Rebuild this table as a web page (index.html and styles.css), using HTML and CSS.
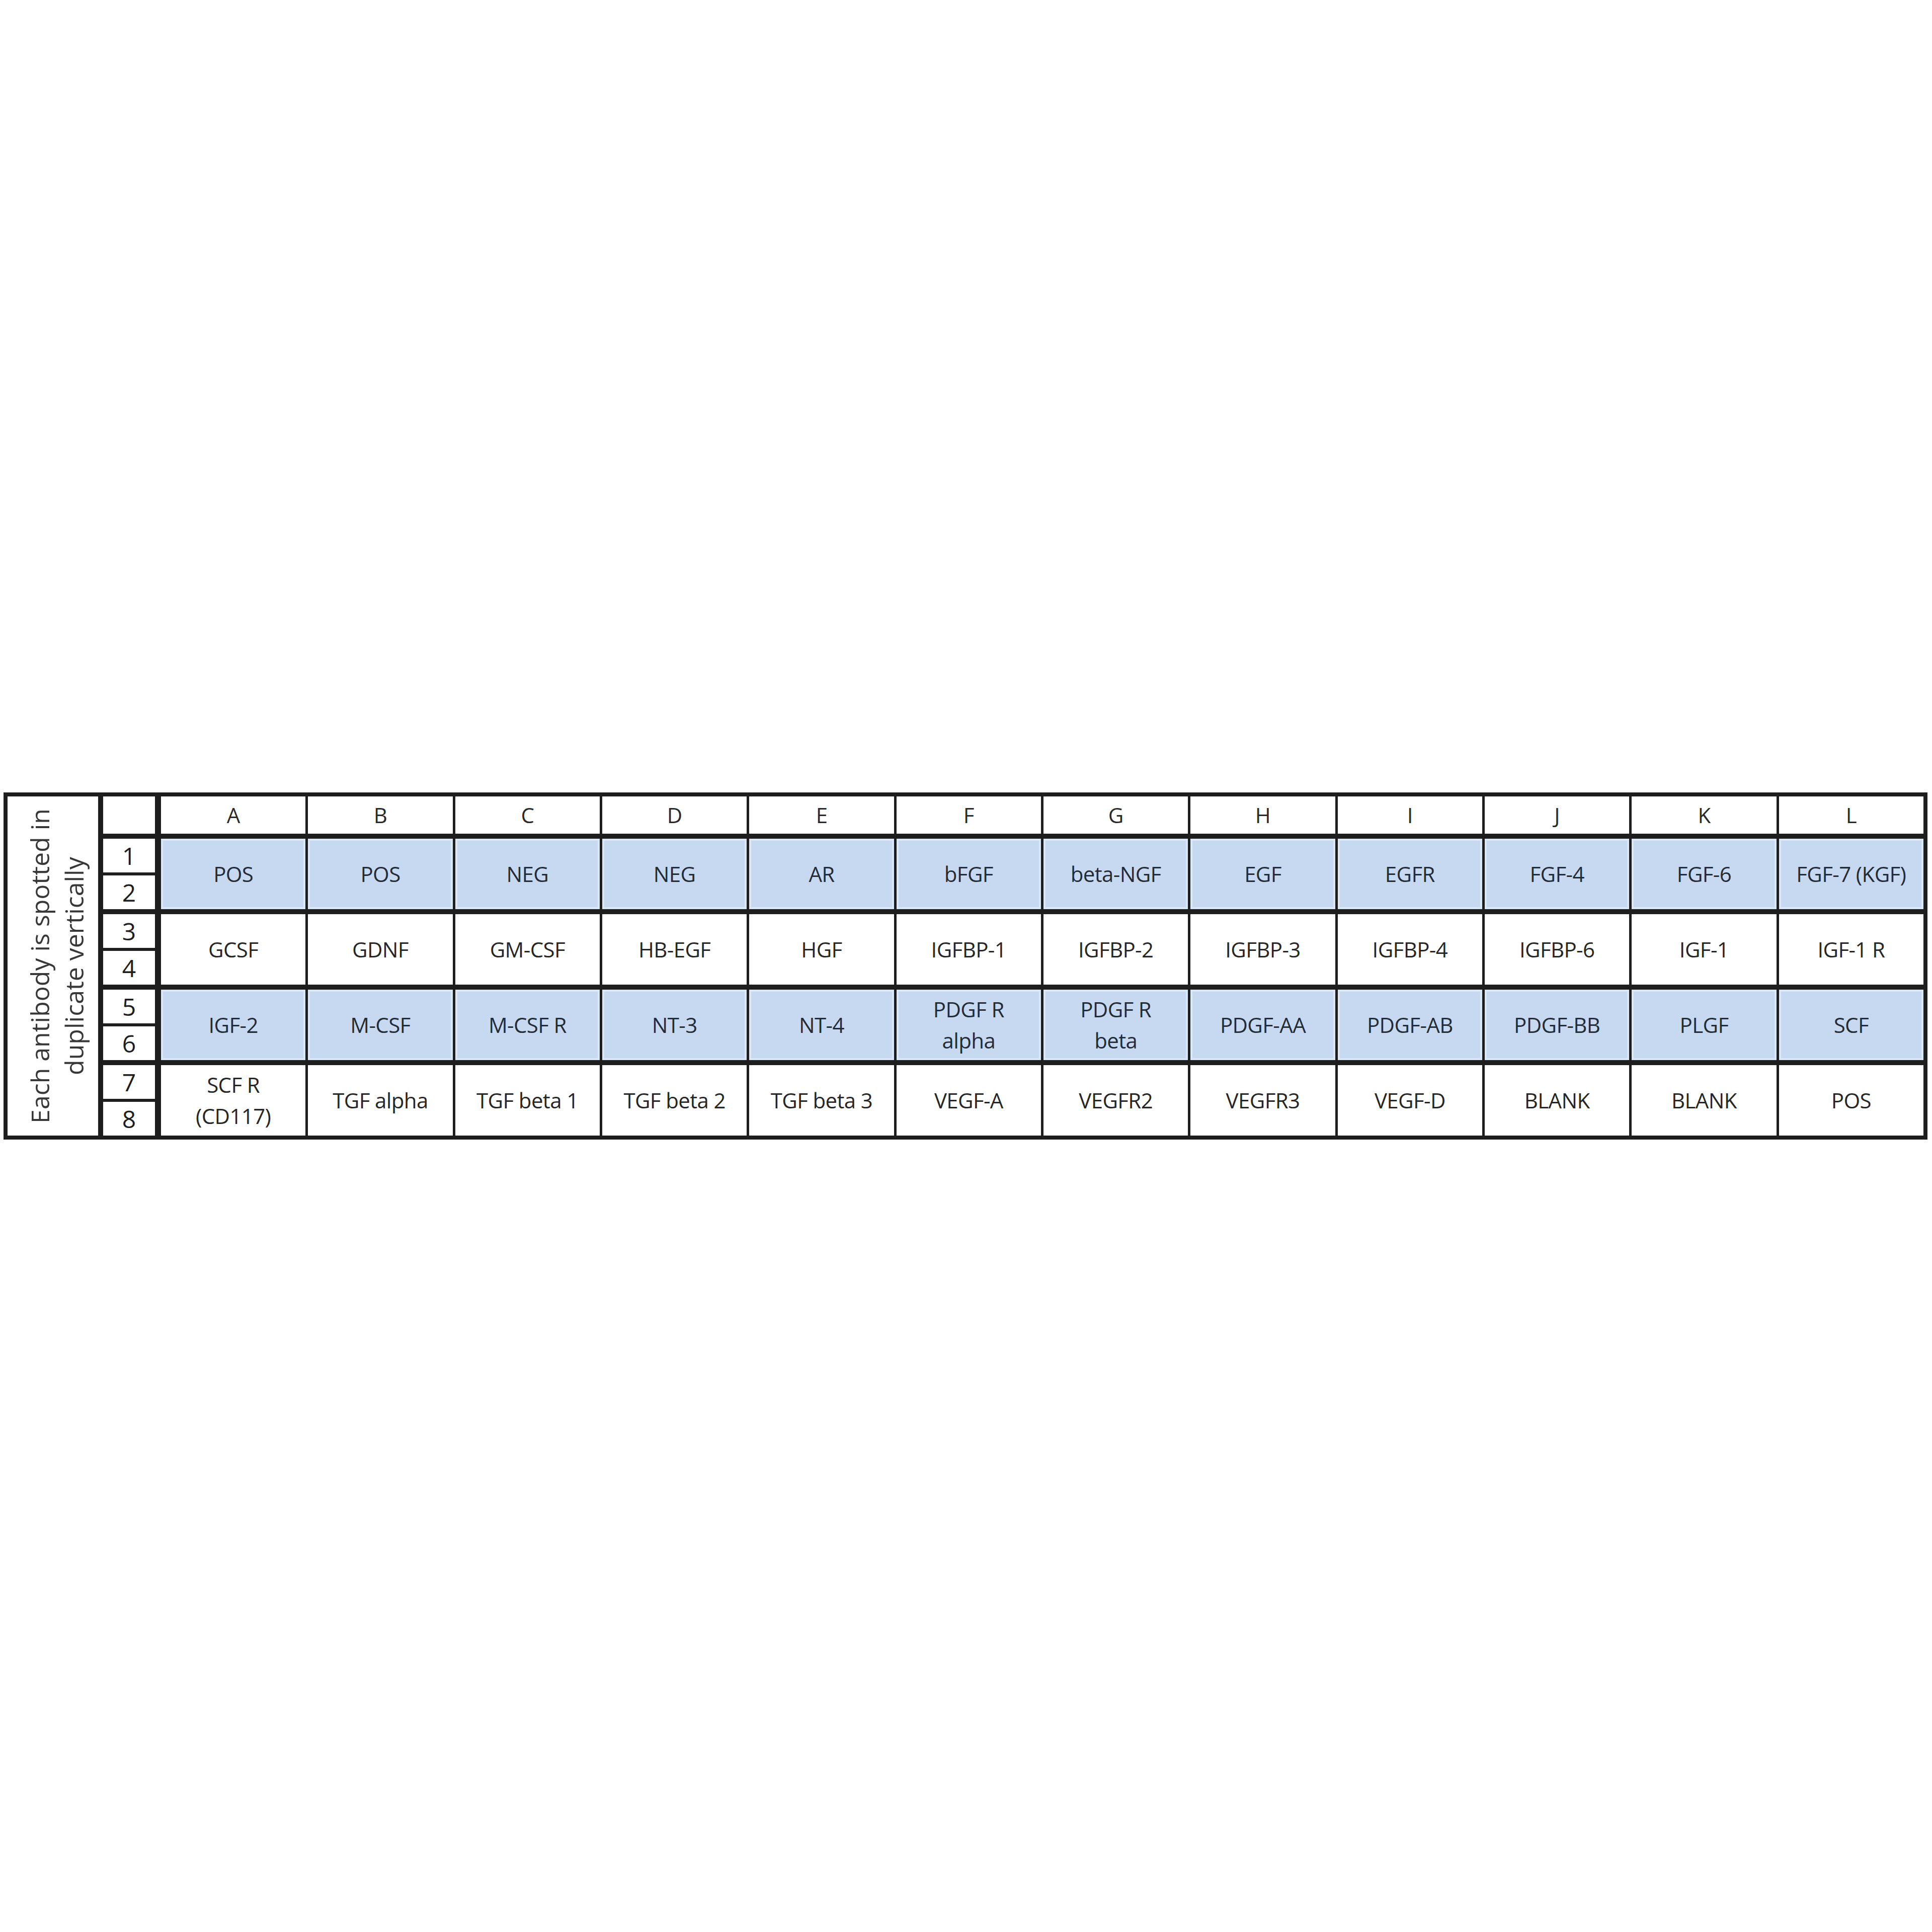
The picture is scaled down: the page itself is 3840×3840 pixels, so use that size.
FILE: index.html
```html
<!DOCTYPE html>
<html lang="en">
<head>
<meta charset="utf-8">
<title>Antibody array map</title>
<link rel="stylesheet" href="styles.css">
</head>
<body>
<div class="sheet">
  <div class="side">
    <div class="side-label">Each antibody is spotted in<br>duplicate vertically</div>
  </div>
  <div class="nums">
    <div class="nums-head"></div>
    <div class="nums-grp"><div class="n">1</div><div class="n">2</div></div>
    <div class="nums-grp"><div class="n">3</div><div class="n">4</div></div>
    <div class="nums-grp"><div class="n">5</div><div class="n">6</div></div>
    <div class="nums-grp"><div class="n">7</div><div class="n">8</div></div>
  </div>
  <div class="grid">
    <div class="c h">A</div><div class="c h">B</div><div class="c h">C</div><div class="c h">D</div><div class="c h">E</div><div class="c h">F</div><div class="c h">G</div><div class="c h">H</div><div class="c h">I</div><div class="c h">J</div><div class="c h">K</div><div class="c h">L</div>

    <div class="c b">POS</div><div class="c b">POS</div><div class="c b">NEG</div><div class="c b">NEG</div><div class="c b">AR</div><div class="c b">bFGF</div><div class="c b">beta-NGF</div><div class="c b">EGF</div><div class="c b">EGFR</div><div class="c b">FGF-4</div><div class="c b">FGF-6</div><div class="c b">FGF-7 (KGF)</div>

    <div class="c w">GCSF</div><div class="c w">GDNF</div><div class="c w">GM-CSF</div><div class="c w">HB-EGF</div><div class="c w">HGF</div><div class="c w">IGFBP-1</div><div class="c w">IGFBP-2</div><div class="c w">IGFBP-3</div><div class="c w">IGFBP-4</div><div class="c w">IGFBP-6</div><div class="c w">IGF-1</div><div class="c w">IGF-1 R</div>

    <div class="c b">IGF-2</div><div class="c b">M-CSF</div><div class="c b">M-CSF R</div><div class="c b">NT-3</div><div class="c b">NT-4</div><div class="c b">PDGF R<br>alpha</div><div class="c b">PDGF R<br>beta</div><div class="c b">PDGF-AA</div><div class="c b">PDGF-AB</div><div class="c b">PDGF-BB</div><div class="c b">PLGF</div><div class="c b">SCF</div>

    <div class="c w">SCF R<br>(CD117)</div><div class="c w">TGF alpha</div><div class="c w">TGF beta 1</div><div class="c w">TGF beta 2</div><div class="c w">TGF beta 3</div><div class="c w">VEGF-A</div><div class="c w">VEGFR2</div><div class="c w">VEGFR3</div><div class="c w">VEGF-D</div><div class="c w">BLANK</div><div class="c w">BLANK</div><div class="c w">POS</div>
  </div>
</div>
</body>
</html>
```

FILE: styles.css
```css
html, body {
  margin: 0;
  background: #ffffff;
}

body {
  padding: 1575px 0 0 7px;
  font-family: "Open Sans", "Noto Sans", sans-serif;
  color: #2a2a2a;
}

.sheet {
  display: flex;
  width: max-content;
  border: 8px solid #1e1e1e;
  background: #ffffff;
}

.side {
  box-sizing: border-box;
  width: 190px;
  padding-left: 16px;
  border-right: 10px solid #1e1e1e;
  display: flex;
  align-items: center;
  justify-content: center;
}

.side-label {
  writing-mode: vertical-rl;
  transform: rotate(180deg);
  text-align: center;
  font-size: 50px;
  line-height: 68px;
  color: #383838;
  white-space: nowrap;
}

.nums {
  box-sizing: border-box;
  width: 115px;
  border-right: 12px solid #1e1e1e;
  display: flex;
  flex-direction: column;
}

.nums-head {
  height: 74px;
  border-bottom: 10px solid #1e1e1e;
}

.nums-grp {
  height: 140px;
  display: flex;
  flex-direction: column;
  border-bottom: 10px solid #1e1e1e;
}

.nums-grp:last-child {
  border-bottom: 0;
}

.n {
  flex: 1;
  display: flex;
  align-items: center;
  justify-content: center;
  font-size: 48px;
  font-weight: 500;
  color: #1e1e1e;
}

.n:first-child {
  border-bottom: 6px solid #1e1e1e;
}

.grid {
  width: 3503px;
  display: grid;
  grid-template-columns: repeat(12, 1fr);
  grid-template-rows: 74px 140px 140px 140px 140px;
  column-gap: 5px;
  row-gap: 10px;
  background: #1e1e1e;
}

.c {
  display: flex;
  align-items: center;
  justify-content: center;
  text-align: center;
  font-size: 42px;
  font-weight: 500;
  line-height: 62px;
  letter-spacing: -0.015em;
}

.h {
  background: #ffffff;
  color: #2a2a2a;
}

.w {
  background: #ffffff;
  color: #262626;
}

.b {
  background: #c6d9f1;
  box-shadow: inset 0 0 0 4px #dae7f7;
  color: #232b37;
}
```
